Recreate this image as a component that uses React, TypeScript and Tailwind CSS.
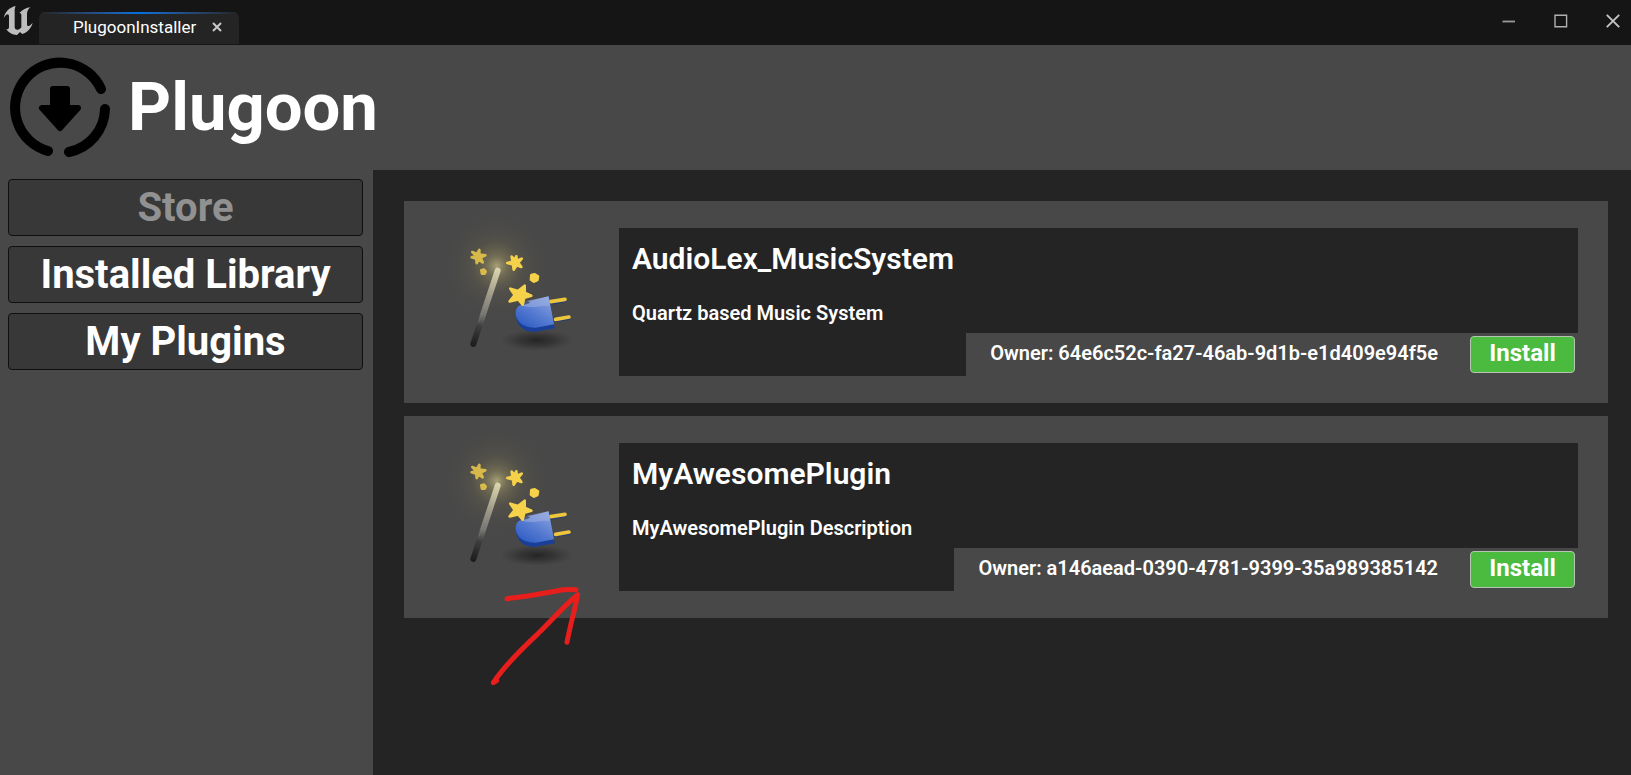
import React from "react";

type Plugin = { name: string; description: string; owner: string };

const plugins: Plugin[] = [
  {
    name: "AudioLex_MusicSystem",
    description: "Quartz based Music System",
    owner: "64e6c52c-fa27-46ab-9d1b-e1d409e94f5e",
  },
  {
    name: "MyAwesomePlugin",
    description: "MyAwesomePlugin Description",
    owner: "a146aead-0390-4781-9399-35a989385142",
  },
];

const navItems = [
  { label: "Store", disabled: true },
  { label: "Installed Library", disabled: false },
  { label: "My Plugins", disabled: false },
];

function EngineLogo() {
  return (
    <svg viewBox="0 0 105 111" className="h-[37px] w-[35px] shrink-0" aria-hidden="true">
      <path
        fill="#bdbdbd"
        d="M47 15C30 19 16 30 11 51C16 43 20 40 23 40C26 40 27 43 27 47V77C27 83 25 85 19 85C26 95 37 102 51 102L60 93L67 99C82 94 93 83 98 65C92 72 88 75 85 75C82 75 81 72 81 68V39C81 31 85 24 91 19C80 20 67 27 58 36C62 36 64 38 64 43V79C61 83 57 86 52 86C47 86 44 83 44 77V30C44 25 45 19 47 15Z"
      />
    </svg>
  );
}

function PlugoonLogo() {
  return (
    <svg viewBox="0 0 100 100" className="size-[100px] shrink-0" aria-hidden="true">
      <g fill="none" stroke="#000" strokeWidth="10" strokeLinecap="round">
        <path d="M91 32A45 45 0 1 0 38 94" />
        <path d="M95 52A45 45 0 0 1 59 95" />
      </g>
      <path
        stroke="#000"
        strokeWidth="6"
        strokeLinejoin="round"
        d="M43 32H57V51H68L50 71L32 51H43Z"
      />
    </svg>
  );
}

function PluginArt({ id }: { id: string }) {
  const glow = `${id}-glow`;
  const wand = `${id}-wand`;
  const body = `${id}-body`;
  const shade = `${id}-shade`;
  return (
    <svg viewBox="12 114 645 444" className="h-[148px] w-[215px] shrink-0 overflow-visible" aria-hidden="true">
      <defs>
        <radialGradient id={glow}>
          <stop offset="0" stopColor="#e8dc98" stopOpacity="0.6" />
          <stop offset="0.2" stopColor="#c8b870" stopOpacity="0.32" />
          <stop offset="0.5" stopColor="#a09050" stopOpacity="0.11" />
          <stop offset="0.75" stopColor="#a09050" stopOpacity="0.03" />
          <stop offset="1" stopColor="#a09050" stopOpacity="0" />
        </radialGradient>
        <linearGradient id={wand} gradientUnits="userSpaceOnUse" x1="293" y1="240" x2="220" y2="465">
          <stop offset="0" stopColor="#d9d2ac" />
          <stop offset="0.3" stopColor="#a5a08f" />
          <stop offset="0.6" stopColor="#747474" />
          <stop offset="0.75" stopColor="#3e3e3e" />
          <stop offset="1" stopColor="#1d1d1d" />
        </linearGradient>
        <linearGradient id={body} gradientUnits="userSpaceOnUse" x1="435" y1="322" x2="375" y2="420">
          <stop offset="0" stopColor="#86a0de" />
          <stop offset="0.5" stopColor="#557ad0" />
          <stop offset="1" stopColor="#2d5bc4" />
        </linearGradient>
        <radialGradient id={shade}>
          <stop offset="0" stopColor="#1c1c1c" stopOpacity="0.8" />
          <stop offset="0.5" stopColor="#242424" stopOpacity="0.5" />
          <stop offset="1" stopColor="#303030" stopOpacity="0" />
        </radialGradient>
      </defs>
      <circle cx="290" cy="228" r="155" fill={`url(#${glow})`} />
      <ellipse cx="411" cy="451" rx="110" ry="32" fill={`url(#${shade})`} />
      <path d="M293 242L220 462" stroke={`url(#${wand})`} strokeWidth="18" strokeLinecap="round" />
      <path d="M270 304L236 399" stroke="#a99a55" strokeWidth="2" strokeDasharray="3 7" />
      <g strokeLinecap="round" fill="none">
        <path d="M450 341L496 333M464 393L508 386" stroke="#283d72" strokeWidth="8" />
        <path d="M452 335L495 328M467 388L507 381" stroke="#edc63e" strokeWidth="11" />
      </g>
      <path d="M348 358C344 392 358 425 403 426L465 415L461 401L408 408Z" fill="#193f99" />
      <path d="M370 338L446 319L462 403L407 413C364 414 344 389 347 363C350 352 358 344 370 338Z" fill={`url(#${body})`} />
      <path d="M374 334L445 319L450 348C421 344 396 358 370 347Z" fill="#a4b4e2" opacity="0.5" />
      <path d="M340 353C354 343 376 349 391 337L374 331Z" fill="#374257" opacity="0.7" />
      <g fill="#f5d24a" stroke="#f5d24a" strokeWidth="8" strokeLinejoin="round">
        <path d="M374 287L374 308L394 317L373 323L368 344L355 328L329 334L344 315L331 296L354 303Z" />
        <path d="M349 199L350 212L365 206L355 218L364 231L350 226L341 239L339 223L322 219L338 215L335 200L344 210Z" />
        <path
          d="M238 180L238 194L256 196L242 203L248 217L236 209L230 219L229 206L215 202L229 198L217 186L231 192Z"
          opacity="0.8"
        />
        <path d="M394 255L404 253L414 259L412 270L402 275L393 269Z" />
        <path d="M244 241L252 239L257 245L254 251L246 251Z" opacity="0.8" />
      </g>
    </svg>
  );
}

function PluginCard({ plugin, id }: { plugin: Plugin; id: string }) {
  return (
    <article className="flex bg-[#484848] py-[27px] pr-[30px]">
      <PluginArt id={id} />
      <div className="flex min-w-0 flex-1 flex-col bg-[#242424]">
        <div className="flex flex-col gap-6 px-[13px] pt-[13px] pb-2">
          <h2 className="text-[30px] leading-9 font-semibold">{plugin.name}</h2>
          <p className="text-[20px] leading-6 font-semibold">{plugin.description}</p>
        </div>
        <div className="mt-auto flex justify-end">
          <div className="flex items-start gap-8 bg-[#484848] pt-[3px] pr-[3px] pb-[3px] pl-6">
            <p className="pt-[5px] text-[20px] leading-6 font-semibold">Owner: {plugin.owner}</p>
            <button
              type="button"
              className="flex h-[37px] w-[105px] justify-center rounded border border-[#b5c5b2] bg-[#4abb3e] text-[24px] leading-8 font-bold"
            >
              Install
            </button>
          </div>
        </div>
      </div>
    </article>
  );
}

export default function App() {
  return (
    <div className="flex min-h-screen flex-col bg-[#242424] font-['Roboto',sans-serif] text-white">
      <div className="flex h-[45px] items-start justify-between bg-[#151515]">
        <div className="flex">
          <div className="flex w-[39px] pt-px">
            <EngineLogo />
          </div>
          <div className="mt-3 flex h-8 w-[200px] flex-col overflow-hidden rounded-t-md bg-[#242424]">
            <div className="h-0.5 bg-linear-to-r from-[#242424] via-[#0070e0] to-[#242424]" />
            <div className="flex items-center gap-4 pl-[34px]">
              <span className="text-[17px] leading-[26px]">PlugoonInstaller</span>
              <button type="button" aria-label="Close tab">
                <svg viewBox="0 0 10 10" className="size-[10px]" aria-hidden="true">
                  <path d="M1 1L9 9M9 1L1 9" stroke="#c8c8c8" strokeWidth="2" />
                </svg>
              </button>
            </div>
          </div>
        </div>
        <div className="flex gap-4">
          <button type="button" aria-label="Minimize" className="flex h-[42px] w-9 items-center justify-center">
            <svg viewBox="0 0 14 14" className="size-[14px]" aria-hidden="true">
              <path d="M0.5 7.5H13" stroke="#9a9a9a" strokeWidth="1.8" />
            </svg>
          </button>
          <button type="button" aria-label="Maximize" className="flex h-[42px] w-9 items-center justify-center">
            <svg viewBox="0 0 14 14" className="size-[14px]" aria-hidden="true">
              <path d="M1 1.2H12.6V12.8H1Z" stroke="#b0b0b0" strokeWidth="1.4" fill="none" />
            </svg>
          </button>
          <button type="button" aria-label="Close" className="flex h-[42px] w-9 items-center justify-center">
            <svg viewBox="0 0 14 14" className="size-[14px]" aria-hidden="true">
              <path d="M0.8 0.8L13.2 13.2M13.2 0.8L0.8 13.2" stroke="#c4c4c4" strokeWidth="1.9" />
            </svg>
          </button>
        </div>
      </div>

      <header className="flex h-[125px] items-center gap-[18px] bg-[#484848] pb-px pl-[10px]">
        <PlugoonLogo />
        <h1 className="text-[67px] leading-none font-bold">Plugoon</h1>
      </header>

      <div className="flex flex-1">
        <nav className="flex w-[373px] shrink-0 flex-col gap-[10px] bg-[#484848] pt-[9px] pr-[10px] pl-2">
          {navItems.map((item) => (
            <button
              key={item.label}
              type="button"
              disabled={item.disabled}
              className="h-[57px] rounded border border-[#0f0f0f] bg-[#383838] text-[40px] leading-[52px] font-bold disabled:text-[#919191]"
            >
              {item.label}
            </button>
          ))}
        </nav>
        <main className="relative flex min-w-0 flex-1 flex-col gap-[13px] pt-[31px] pr-[23px] pl-[31px]">
          {plugins.map((plugin, i) => (
            <PluginCard key={plugin.name} plugin={plugin} id={`plugin-${i}`} />
          ))}
          <svg
            viewBox="0 0 420 390"
            className="pointer-events-none absolute top-[400px] left-[97px] h-[130px] w-[140px]"
            aria-hidden="true"
          >
            <g fill="none" stroke="#e81e1c" strokeWidth="15" strokeLinecap="round" strokeLinejoin="round">
              <path d="M111 86C165 81 215 71 260 63Q282 58 318 59" />
              <path d="M80 332L70 338C95 300 145 246 205 190C250 146 285 104 323 74C315 120 303 153 291 217" />
            </g>
          </svg>
        </main>
      </div>
    </div>
  );
}
